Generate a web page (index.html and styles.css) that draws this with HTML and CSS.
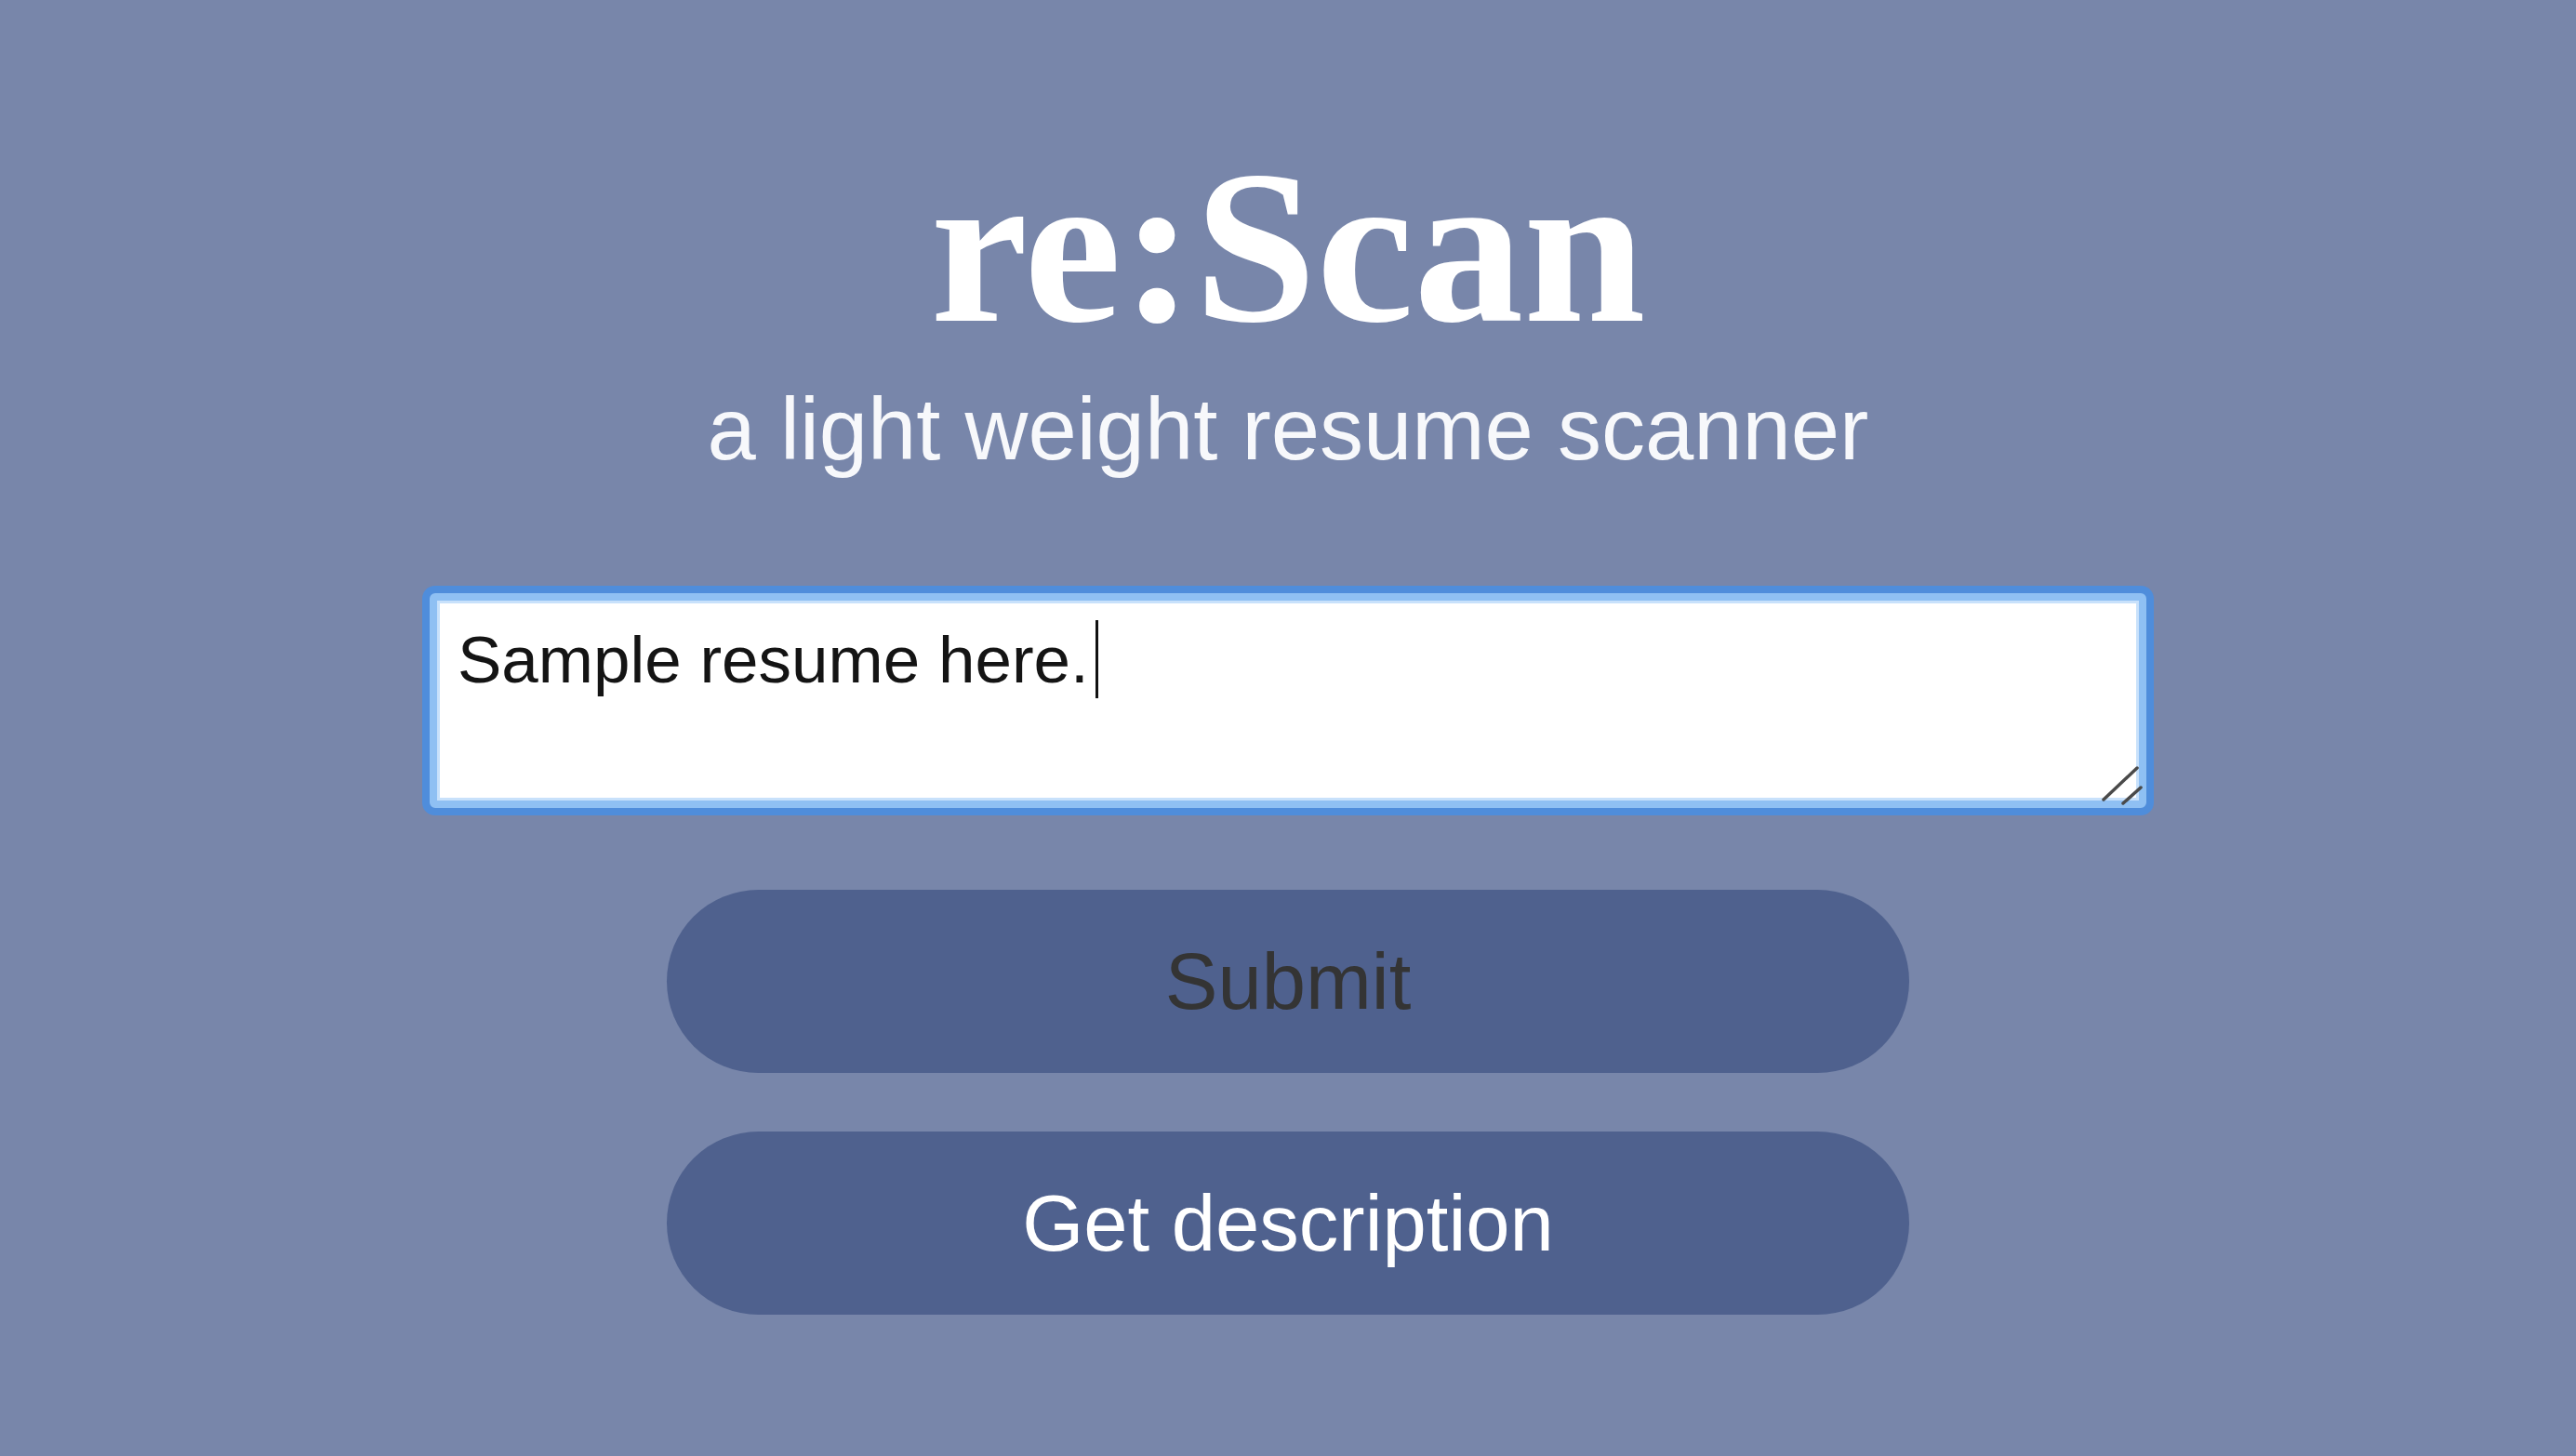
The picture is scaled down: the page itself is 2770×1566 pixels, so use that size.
FILE: index.html
```html
<!DOCTYPE html>
<html lang="en">
<head>
<meta charset="utf-8">
<title>re:Scan</title>
<link rel="stylesheet" href="styles.css">
</head>
<body>
<main class="page">
  <h1 class="title">re:Scan</h1>
  <p class="subtitle">a light weight resume scanner</p>
  <div class="field">
    <textarea class="resume" spellcheck="false">Sample resume here.</textarea>
    <span class="caret"></span>
    <svg class="grip" width="50" height="50" viewBox="0 0 50 50" aria-hidden="true">
      <line x1="6" y1="44" x2="42" y2="10" />
      <line x1="27" y1="48" x2="46" y2="31" />
    </svg>
  </div>
  <div class="actions">
    <button class="btn btn-submit" type="button">Submit</button>
    <button class="btn btn-desc" type="button">Get description</button>
  </div>
</main>
</body>
</html>
```
FILE: styles.css
```css
html, body {
  margin: 0;
  padding: 0;
}
body {
  background: #7886aa;
  font-family: "Liberation Sans", Arial, sans-serif;
  min-height: 100vh;
}
.page {
  display: flex;
  flex-direction: column;
  align-items: center;
  padding-top: 148px;
}
.title {
  margin: 0;
  font-family: "Liberation Serif", "Times New Roman", serif;
  font-weight: 700;
  font-size: 236px;
  line-height: 1;
  color: #ffffff;
  letter-spacing: 0;
}
.subtitle {
  margin: 31px 0 0;
  font-size: 94px;
  line-height: 1;
  color: #f7f8fb;
}
.field {
  position: relative;
  margin-top: 129px;
  width: 1846px;
  height: 231px;
}
.resume {
  box-sizing: border-box;
  display: block;
  width: 1846px;
  height: 231px;
  margin: 0;
  padding: 23px 22px;
  font-family: "Liberation Sans", Arial, sans-serif;
  font-size: 71px;
  color: #141414;
  background: #ffffff;
  border: 8px solid #8fc0f3;
  border-radius: 6px;
  box-shadow: 0 0 0 8px #4f8ddb, inset 0 0 0 3px #c8e1fb;
  outline: none;
  resize: none;
  overflow: hidden;
}
.caret {
  position: absolute;
  left: 716px;
  top: 29px;
  width: 3px;
  height: 84px;
  background: #111;
}
.grip {
  position: absolute;
  left: 1794px;
  top: 178px;
  stroke: #4a4a4a;
  stroke-width: 3.5;
  stroke-linecap: round;
}
.actions {
  display: flex;
  flex-direction: column;
  align-items: center;
  gap: 63px;
  margin-top: 88px;
}
.btn {
  width: 1336px;
  height: 197px;
  border: none;
  border-radius: 99px;
  background: #4f618e;
  font-family: "Liberation Sans", Arial, sans-serif;
  font-size: 85px;
  padding: 0;
  cursor: pointer;
}
.btn-submit {
  color: #343434;
}
.btn-desc {
  color: #ffffff;
}
```
